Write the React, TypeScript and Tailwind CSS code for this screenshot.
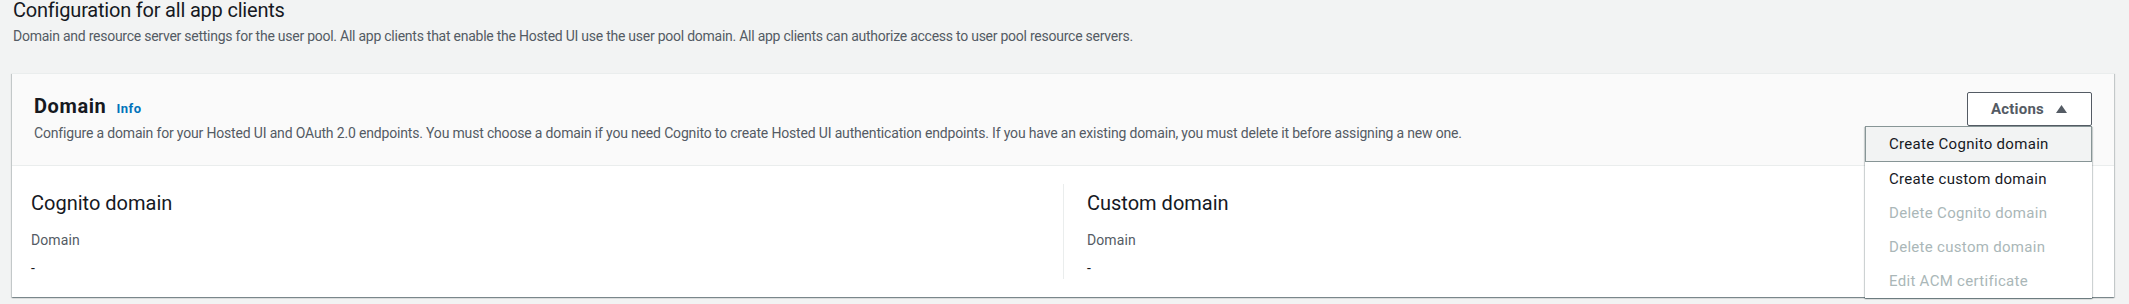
const actions = [
  { label: "Create Cognito domain", enabled: true, active: true },
  { label: "Create custom domain", enabled: true },
  { label: "Delete Cognito domain", enabled: false },
  { label: "Delete custom domain", enabled: false },
  { label: "Edit ACM certificate", enabled: false },
];

function DomainColumn({ title, divider }: { title: string; divider?: boolean }) {
  return (
    <div className={divider ? "border-l border-[#eaeded] pl-[23px] pt-[7px] pb-[1px]" : "pt-[7px] pb-[1px]"}>
      <h3 className="text-[20px] leading-[24px] text-[#16191f]">{title}</h3>
      <div className="mt-[15px] text-[14px] leading-[20px] tracking-[0.1px] text-[#545b64]">Domain</div>
      <div className="mt-[8px] text-[14px] leading-[20px] text-[#16191f]">-</div>
    </div>
  );
}

export default function App() {
  return (
    <div className="min-h-screen bg-[#f2f3f3] font-['Roboto',sans-serif] text-[#16191f] pl-[12px] pr-[15px]">
      <h2 className="pl-px text-[20px] leading-[20px] tracking-[-0.2px] text-[#16191f]">
        Configuration for all app clients
      </h2>
      <p className="mt-[6px] pl-px text-[14px] leading-[20px] tracking-[-0.25px] text-[#545b64]">
        Domain and resource server settings for the user pool. All app clients that enable the Hosted UI use the user
        pool domain. All app clients can authorize access to user pool resource servers.
      </p>

      <div className="mt-[27px] bg-white border-t border-[#eaeded] shadow-[0_1px_1px_0_rgba(0,28,36,0.3),1px_1px_1px_0_rgba(0,28,36,0.15),-1px_1px_1px_0_rgba(0,28,36,0.15)]">
        {/* Header */}
        <div className="flex items-start justify-between bg-[#fafafa] border-b border-[#eaeded] pl-[22px] pr-[22px] pt-[20px] pb-[22px]">
          <div>
            <div className="flex items-baseline gap-[10px]">
              <h2 className="text-[20px] leading-[24px] tracking-[0.6px] font-bold text-[#16191f]">Domain</h2>
              <a className="text-[13px] font-bold tracking-[0.5px] text-[#0073bb]">Info</a>
            </div>
            <p className="mt-[4px] text-[14px] leading-[20px] tracking-[-0.17px] text-[#545b64]">
              Configure a domain for your Hosted UI and OAuth 2.0 endpoints. You must choose a domain if you need Cognito
              to create Hosted UI authentication endpoints. If you have an existing domain, you must delete it before
              assigning a new one.
            </p>
          </div>

          <div className="relative mt-[-2px]">
            <button className="flex h-[34px] w-[125px] items-center gap-[12px] rounded-[2px] border border-[#545b64] bg-white pl-[23px] text-[15px] font-bold tracking-[0.2px] text-[#545b64]">
              Actions
              <svg width="11" height="8" viewBox="0 0 11 8" className="fill-[#545b64]">
                <path d="M5.5 0L11 8H0z" />
              </svg>
            </button>

            <ul className="absolute right-0 top-full z-10 w-[227px] bg-white shadow-[0_1px_1px_0_rgba(0,28,36,0.3),1px_1px_1px_0_rgba(0,28,36,0.15),-1px_1px_1px_0_rgba(0,28,36,0.15)]">
              {actions.map((a) =>
                a.active ? (
                  <li
                    key={a.label}
                    className="flex h-[36px] items-center border border-[#879596] bg-[#f2f3f3] pl-[23px] text-[15px] tracking-[0.3px] text-[#16191f]"
                  >
                    {a.label}
                  </li>
                ) : (
                  <li
                    key={a.label}
                    className={`flex h-[34px] items-center pl-[24px] text-[15px] tracking-[0.3px] ${
                      a.enabled ? "text-[#16191f]" : "text-[#aab7b8]"
                    }`}
                  >
                    {a.label}
                  </li>
                )
              )}
            </ul>
          </div>
        </div>

        {/* Body */}
        <div className="grid grid-cols-2 pl-[19px] pr-[19px] pt-[18px] pb-[18px]">
          <DomainColumn title="Cognito domain" />
          <DomainColumn title="Custom domain" divider />
        </div>
      </div>
    </div>
  );
}
